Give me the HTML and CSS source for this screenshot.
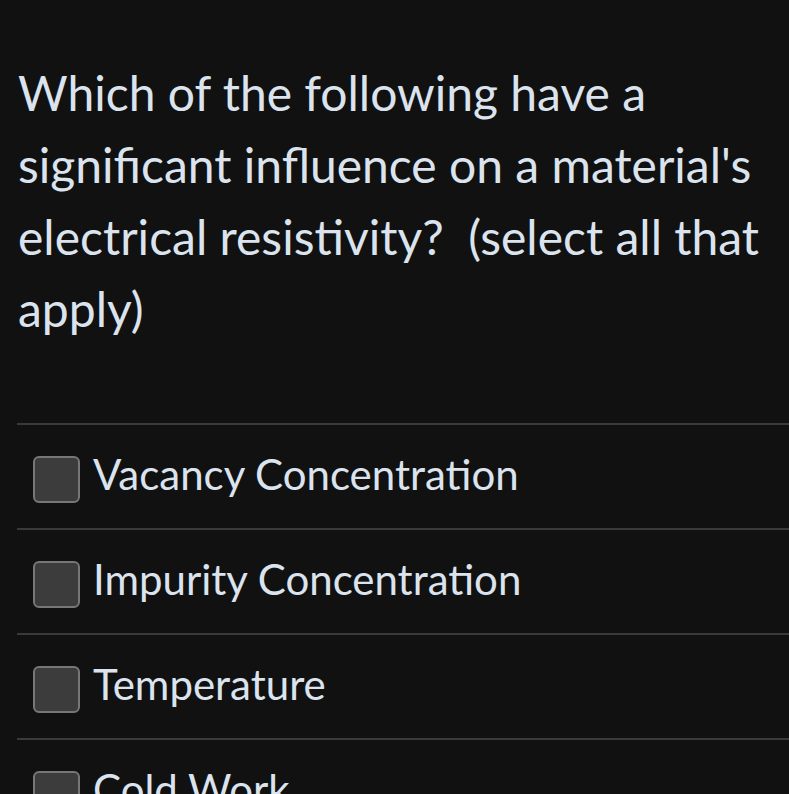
FILE: index.html
```html
<!DOCTYPE html>
<html>
<head>
<meta charset="utf-8">
<link rel="stylesheet" href="styles.css">
</head>
<body>
<main class="quiz">
  <p class="question">Which of the following have a significant influence on a material's electrical resistivity?&nbsp; (select all that apply)</p>
  <ul class="answers">
    <li class="answer"><span class="box"></span><span class="label">Vacancy Concentration</span></li>
    <li class="answer"><span class="box"></span><span class="label">Impurity Concentration</span></li>
    <li class="answer"><span class="box"></span><span class="label">Temperature</span></li>
    <li class="answer"><span class="box"></span><span class="label">Cold Work</span></li>
  </ul>
</main>
</body>
</html>
```
FILE: styles.css
```css
html, body {
  margin: 0;
  padding: 0;
  background: #111111;
  overflow: hidden;
  height: 794px;
}
.quiz {
  padding: 57px 0 0 17px;
  font-family: Lato, "Noto Sans", sans-serif;
  color: #dbe4ee;
}
.question {
  margin: 0;
  font-size: 48px;
  line-height: 72px;
  padding-left: 1px;
  padding-right: 20px;
}
.answers {
  list-style: none;
  margin: 78px 0 0 0;
  padding: 0;
}
.answer {
  border-top: 2px solid #3a3a3a;
  height: 103px;
  display: flex;
  align-items: center;
  gap: 13px;
  padding-left: 16px;
  box-sizing: content-box;
}
.box {
  width: 43px;
  height: 43px;
  border: 2px solid #777777;
  border-radius: 6px;
  background: #3c3c3c;
  flex: none;
  margin-top: 6px;
}
.label {
  font-size: 42px;
  line-height: 50px;
  margin-bottom: 5px;
}
```
